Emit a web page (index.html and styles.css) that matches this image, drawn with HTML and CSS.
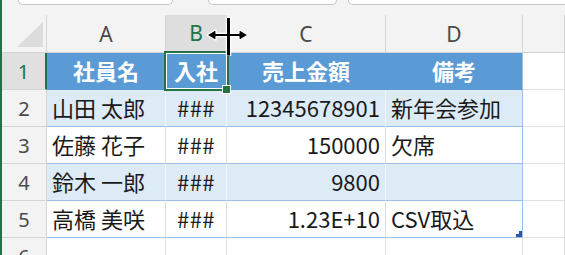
FILE: index.html
```html
<!DOCTYPE html>
<html lang="ja">
<head>
<meta charset="utf-8">
<title>Sheet</title>
<link rel="stylesheet" href="styles.css">
</head>
<body>
<div class="app">
  <div class="topbar">
    <div class="box box-name"></div>
    <div class="box box-mid"></div>
    <div class="box box-formula"></div>
  </div>
  <div class="sheet">
    <div class="corner"><span class="tri"></span></div>
    <div class="ch">A</div>
    <div class="ch ch-sel">B</div>
    <div class="ch">C</div>
    <div class="ch">D</div>
    <div class="ch"></div>

    <div class="rh rh-sel">1</div>
    <div class="c th">社員名</div>
    <div class="c th active">入社</div>
    <div class="c th">売上金額</div>
    <div class="c th last">備考</div>
    <div class="c out"></div>

    <div class="rh">2</div>
    <div class="c band">山田 太郎</div>
    <div class="c band ctr">###</div>
    <div class="c band num">12345678901</div>
    <div class="c band last">新年会参加</div>
    <div class="c out"></div>

    <div class="rh">3</div>
    <div class="c plain">佐藤 花子</div>
    <div class="c plain ctr">###</div>
    <div class="c plain num">150000</div>
    <div class="c plain last">欠席</div>
    <div class="c out"></div>

    <div class="rh">4</div>
    <div class="c band">鈴木 一郎</div>
    <div class="c band ctr">###</div>
    <div class="c band num">9800</div>
    <div class="c band last"></div>
    <div class="c out"></div>

    <div class="rh">5</div>
    <div class="c plain">高橋 美咲</div>
    <div class="c plain ctr">###</div>
    <div class="c plain num">1.23E+10</div>
    <div class="c plain last end">CSV取込</div>
    <div class="c out"></div>

    <div class="rh">6</div>
    <div class="c out"></div>
    <div class="c out"></div>
    <div class="c out"></div>
    <div class="c out"></div>
    <div class="c out"></div>
  </div>
  <svg class="cursor" width="50" height="44" viewBox="0 0 50 44">
    <path d="M25.5 2.5 V41" stroke="#fff" stroke-width="5.5" fill="none"/>
    <path d="M4 20 L13 14.5 V18.3 H36 V14.5 L45 20 L36 25.5 V21.7 H13 V25.5 Z" fill="#000" stroke="#fff" stroke-width="1.2" stroke-linejoin="round"/>
    <path d="M25.5 3 V40.5" stroke="#000" stroke-width="3" fill="none"/>
  </svg>
</div>
</body>
</html>
```
FILE: styles.css
```css
html, body {
  margin: 0;
  padding: 0;
  background: #ffffff;
}

.app {
  position: relative;
  width: 565px;
  height: 255px;
  overflow: hidden;
  border-left: 2px solid #217346;
  box-sizing: border-box;
  background: #ffffff;
  font-family: "Noto Sans CJK JP", "Noto Sans", sans-serif;
}

.topbar {
  height: 15px;
  background: #f3f3f3;
  display: flex;
  align-items: flex-start;
}

.box {
  height: 4px;
  background: #ffffff;
  border: 1px solid #c4c4c4;
  border-top: none;
  border-radius: 0 0 6px 6px;
}

.box-name {
  margin-left: 16px;
  width: 153px;
}

.box-mid {
  margin-left: 35px;
  width: 127px;
}

.box-formula {
  margin-left: 11px;
  flex: 1;
  margin-right: -10px;
}

.sheet {
  display: grid;
  grid-template-columns: 45px 119px 61px 159px 137px 1fr;
  grid-template-rows: 38px repeat(6, 37px);
}

.corner {
  background: #f3f3f3;
  border-right: 1px solid #d4d4d4;
  border-bottom: 1px solid #d4d4d4;
  box-sizing: border-box;
  display: flex;
  align-items: flex-end;
  justify-content: flex-end;
  padding: 0 3px 5px 0;
}

.tri {
  display: block;
  width: 26px;
  height: 25px;
  background: #dcdcdc;
  clip-path: polygon(100% 0, 100% 100%, 0 100%);
}

.ch {
  background: #f3f3f3;
  border-right: 1px solid #d4d4d4;
  border-bottom: 1px solid #d4d4d4;
  box-sizing: border-box;
  display: flex;
  align-items: center;
  justify-content: center;
  font-family: "Noto Sans", "Open Sans", sans-serif;
  font-size: 21px;
  color: #4a4a4a;
}

.ch-sel {
  background: #dedede;
  color: #217346;
  border-bottom: 2px solid #217346;
}

.rh {
  background: #f3f3f3;
  border-right: 1px solid #d4d4d4;
  border-bottom: 1px solid #d4d4d4;
  box-sizing: border-box;
  display: flex;
  align-items: center;
  justify-content: center;
  font-family: "Noto Sans", "Open Sans", sans-serif;
  font-size: 20px;
  color: #4a4a4a;
}

.rh-sel {
  background: #e0e0e0;
  color: #217346;
  border-right: 2px solid #217346;
}

.c {
  box-sizing: border-box;
  border-right: 1px solid #e1e1e1;
  border-bottom: 1px solid #e1e1e1;
  font-size: 22px;
  line-height: 35px;
  color: #1a1a1a;
  padding: 0 5px;
  white-space: nowrap;
  overflow: visible;
}

.th {
  background: #5b9bd5;
  color: #ffffff;
  font-weight: 700;
  text-align: center;
  border-right-color: #5b9bd5;
  border-bottom-color: #5b9bd5;
}

.band {
  background: #ddebf7;
  border-right-color: #eef5fc;
  border-bottom-color: #9bc2e6;
}

.plain {
  background: #ffffff;
  border-right-color: #dcdcdc;
  border-bottom-color: #9bc2e6;
}

.last {
  border-right-color: #9bc2e6;
}

.ctr {
  text-align: center;
  letter-spacing: 0.5px;
}

.num {
  text-align: right;
}

.out {
  background: #ffffff;
}

.active {
  position: relative;
  z-index: 2;
}

.active::after {
  content: "";
  position: absolute;
  left: -2px;
  top: -2px;
  right: -3px;
  bottom: -2px;
  border: 2px solid #217346;
  box-shadow: inset 0 0 0 1px #ffffff;
}

.active::before {
  content: "";
  position: absolute;
  right: -5px;
  bottom: -5px;
  width: 7px;
  height: 7px;
  background: #217346;
  border: 1px solid #ffffff;
  z-index: 3;
}

.end {
  position: relative;
}

.end::after {
  content: "";
  position: absolute;
  right: 0;
  bottom: 0;
  width: 6px;
  height: 6px;
  background: #2f55a8;
  clip-path: polygon(100% 0, 100% 100%, 0 100%, 0 50%, 50% 50%, 50% 0);
}

.cursor {
  position: absolute;
  left: 201px;
  top: 15px;
  z-index: 5;
}
```
